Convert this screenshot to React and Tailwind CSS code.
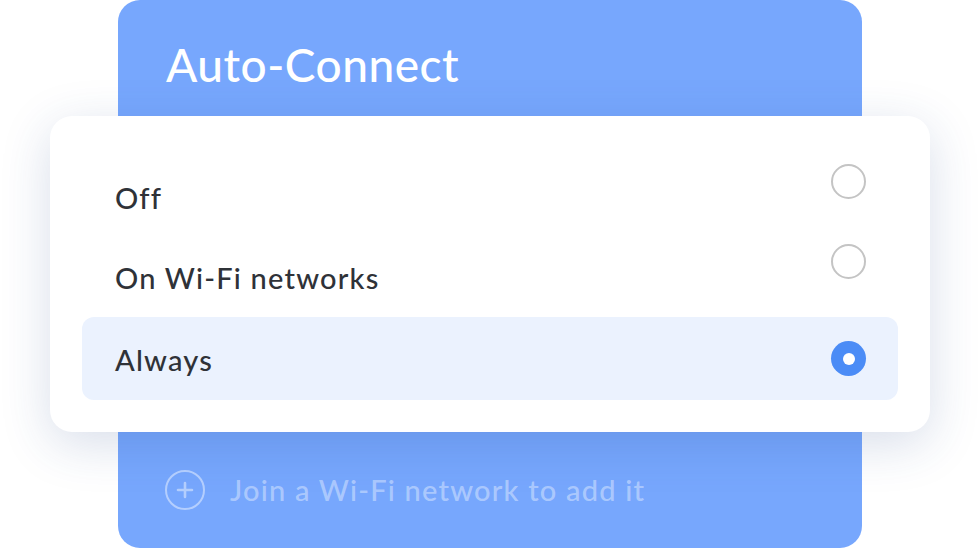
const options = [
  { label: "Off", selected: false },
  { label: "On Wi-Fi networks", selected: false },
  { label: "Always", selected: true },
];

function Radio({ selected }) {
  if (selected) {
    return (
      <span className="flex h-[35px] w-[35px] items-center justify-center rounded-full bg-[#4b8cf6]">
        <span className="h-[12px] w-[12px] rounded-full bg-white" />
      </span>
    );
  }
  return <span className="mb-[31px] h-[35px] w-[35px] rounded-full border-2 border-[#c4c4c4] bg-white" />;
}

export default function App() {
  return (
    <div className="h-[548px] w-[980px] overflow-hidden bg-white font-['Lato','Liberation_Sans',sans-serif]">
      <div className="ml-[118px] flex h-[548px] w-[744px] flex-col rounded-[22px] bg-[#77a7fd]">
        {/* Header */}
        <div className="flex h-[116px] items-center px-[48px] pt-[12px]">
          <h1 className="text-[46px] font-medium tracking-[0.5px] text-white">Auto-Connect</h1>
        </div>

        {/* Options card */}
        <div className="-mx-[68px] rounded-[22px] bg-white px-[32px] pb-[32px] pt-[41px] shadow-[0_12px_50px_rgba(40,70,140,0.18)]">
          {options.map((o) => (
            <div
              key={o.label}
              className={`flex h-[80px] items-center justify-between rounded-[12px] pl-[33px] pr-[32px] ${o.selected ? "bg-[#ebf2fe] h-[83px]" : ""}`}
            >
              <span className="pt-[2px] text-[29px] font-medium tracking-[1.2px] text-[#2f3238]">{o.label}</span>
              <Radio selected={o.selected} />
            </div>
          ))}
        </div>

        {/* Footer */}
        <div className="flex flex-1 items-center gap-[25px] px-[47px]">
          <svg width="40" height="40" viewBox="0 0 40 40" fill="none" stroke="rgba(255,255,255,0.45)" strokeWidth="2">
            <circle cx="20" cy="20" r="19" />
            <path d="M20 13v14M13 20h14" strokeWidth="2.6" strokeLinecap="round" />
          </svg>
          <span className="text-[29px] font-medium tracking-[1.2px] text-white/40">Join a Wi-Fi network to add it</span>
        </div>
      </div>
    </div>
  );
}
